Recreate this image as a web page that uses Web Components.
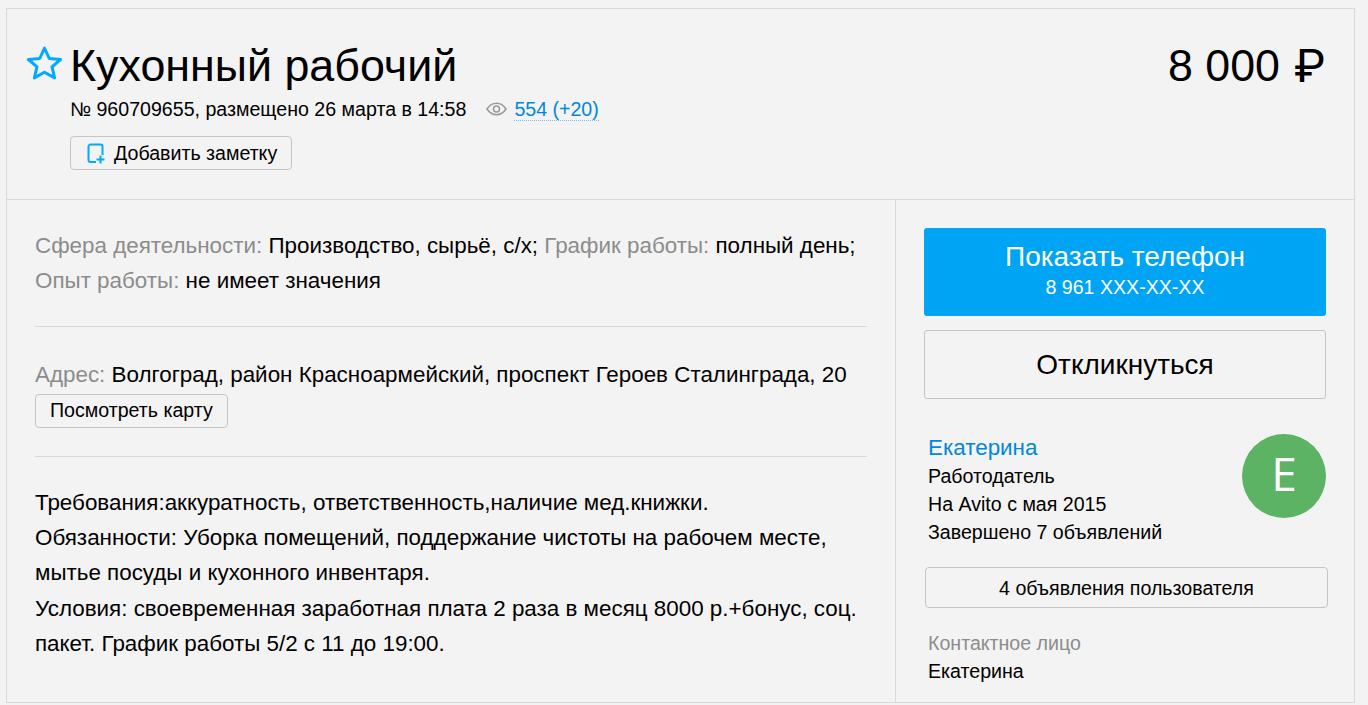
<!DOCTYPE html>
<html lang="ru">
<head>
<meta charset="utf-8">
<title>Кухонный рабочий</title>
<style>
html,body{margin:0;padding:0;background:#f3f3f3;height:705px;overflow:hidden}
body{font-family:"Liberation Sans",Arial,sans-serif;color:#000}
</style>
</head>
<body>
<ad-page>
  <ad-header></ad-header>
  <ad-main>
    <ad-content slot="left"></ad-content>
    <ad-sidebar slot="right"></ad-sidebar>
  </ad-main>
</ad-page>
<script>
const def=(name,html)=>customElements.define(name,class extends HTMLElement{
  constructor(){super();this.attachShadow({mode:'open'}).innerHTML=html;}
});
def('ad-page',`<style>
:host{display:block;box-sizing:border-box;margin:8px 13px 0 6px;height:695px;border:1px solid #d9d9d9}
</style><slot></slot>`);
def('ad-btn',`<style>
:host{display:inline-flex;align-items:center;justify-content:center;box-sizing:border-box;height:34px;padding:0 14px;
border:1px solid #c4c4c4;border-radius:4px;font-size:19.6px;color:#000;white-space:nowrap}
</style><slot></slot>`);
def('ad-header',`<style>
:host{display:flex;justify-content:space-between;box-sizing:border-box;height:191px;border-bottom:1px solid #d9d9d9;padding:0 29px 0 19px}
.l{display:flex;gap:8px;align-items:flex-start}
svg.star{margin-top:36px;flex:none}
h1{margin:28px 0 0;font-size:44.8px;line-height:56px;font-weight:400;white-space:nowrap}
.meta{display:flex;align-items:center;font-size:19.6px;line-height:28px;margin-top:2px;white-space:nowrap}
.eye{margin:0 7px 0 20px;flex:none}
.views{color:#0088d9;border-bottom:1px dotted #7cc0ea;line-height:22px;height:22px}
ad-btn{margin-top:13px}
ad-btn svg{margin-right:9px;margin-left:2px}
.price{font-size:44.8px;line-height:56px;margin-top:28px;white-space:nowrap}
.rub{font-family:Roboto,sans-serif;font-size:46px;margin-left:2px;vertical-align:-1px}
</style>
<div class="l">
<svg class="star" width="36" height="36" viewBox="0 0 36 36" fill="none" stroke="#0af" stroke-width="3" stroke-linejoin="round"><path d="M18.500 3l4.700 10.400 11.300 1.100-8.500 7.400 2.600 11L18.500 27.200 8.400 32.900l2.600-11L2.400 14.500l11.400-1.100z"/></svg>
<div>
<h1>Кухонный рабочий</h1>
<div class="meta"><span>№ 960709655, размещено 26 марта в 14:58</span>
<svg class="eye" width="21" height="14" viewBox="0 0 21 14" fill="none" stroke="#999" stroke-width="1.500"><path d="M1 7c2.500-3.800 5.700-5.700 9.500-5.700S17.500 3.200 20 7c-2.500 3.800-5.700 5.700-9.500 5.700S3.500 10.800 1 7z"/><circle cx="10.500" cy="7" r="3"/></svg>
<span class="views">554 (+20)</span></div>
<ad-btn><svg width="18" height="21" viewBox="0 0 18 21" fill="none" stroke="#0af" stroke-width="2"><path d="M9 19H3.500a2 2 0 0 1-2-2V3.500a2 2 0 0 1 2-2h10a2 2 0 0 1 2 2V12"/><path d="M9.500 16.500h8M13.500 12.500v8"/></svg>Добавить заметку</ad-btn>
</div></div>
<div class="price">8 000 <span class="rub">₽</span></div>`);
def('ad-main',`<style>
:host{display:grid;grid-template-columns:889px 1fr;height:502px}
::slotted([slot=left]){border-right:1px solid #d9d9d9}
</style><slot name="left"></slot><slot name="right"></slot>`);
def('ad-content',`<style>
:host{display:block;box-sizing:border-box;padding:28px 28px 0 28px;font-size:22.4px;line-height:35.28px;white-space:nowrap}
.g{color:#8c8c8c}
hr{border:0;border-top:1px solid #d9d9d9;margin:0}
.params{margin-bottom:27px}
.addr{margin-top:30px;margin-bottom:2px}
ad-btn{display:flex;width:max-content}
hr.b{margin-top:28px;margin-bottom:28px}
</style>
<div class="params"><span class="g">Сфера деятельности:</span> Производство, сырьё, с/х; <span class="g">График работы:</span> полный день;<br><span class="g">Опыт работы:</span> не имеет значения</div>
<hr>
<div class="addr"><span class="g">Адрес:</span> Волгоград, район Красноармейский, проспект Героев Сталинграда, 20</div>
<ad-btn>Посмотреть карту</ad-btn>
<hr class="b">
<div>Требования:аккуратность, ответственность,наличие мед.книжки.<br>Обязанности: Уборка помещений, поддержание чистоты на рабочем месте,<br>мытье посуды и кухонного инвентаря.<br>Условия: своевременная заработная плата 2 раза в месяц 8000 р.+бонус, соц.<br>пакет. График работы 5/2 с 11 до 19:00.</div>`);
def('ad-sidebar',`<style>
:host{display:block;box-sizing:border-box;padding:28px 28px 0 28px}
.call{box-sizing:border-box;height:88px;padding-bottom:5px;background:#00a4f5;border-radius:3px;color:#fff;display:flex;flex-direction:column;align-items:center;justify-content:center;text-align:center}
.call b{font-weight:400;font-size:28px;line-height:34px}
.call span{font-size:19.6px;line-height:26px}
.reply{box-sizing:border-box;height:69px;margin-top:14px;border:1px solid #c4c4c4;border-radius:3px;display:flex;align-items:center;justify-content:center;font-size:28px}
.seller{display:flex;justify-content:space-between;margin-top:34px;padding-left:4px}
.name{color:#0088d9;font-size:22.4px;line-height:29px}
.row{font-size:19.6px;line-height:28px}
.av{box-sizing:border-box;width:84px;height:84px;margin-top:1px;padding-bottom:6px;border-radius:50%;background:#5cb363;color:#fff;font-family:"Open Sans",sans-serif;font-size:46px;display:flex;align-items:center;justify-content:center;flex:none}
ad-btn{display:flex;margin:21px -2px 0 1px;height:41px;padding-top:2px}
.contact{margin-top:21px;padding-left:4px}
.g{color:#8c8c8c}
</style>
<div class="call"><b>Показать телефон</b><span>8 961 XXX-XX-XX</span></div>
<div class="reply">Откликнуться</div>
<div class="seller"><div><div class="name">Екатерина</div><div class="row">Работодатель</div><div class="row">На Avito с мая 2015</div><div class="row">Завершено 7 объявлений</div></div><div class="av">E</div></div>
<ad-btn>4 объявления пользователя</ad-btn>
<div class="contact"><div class="row g">Контактное лицо</div><div class="row">Екатерина</div></div>`);
</script>
</body>
</html>
